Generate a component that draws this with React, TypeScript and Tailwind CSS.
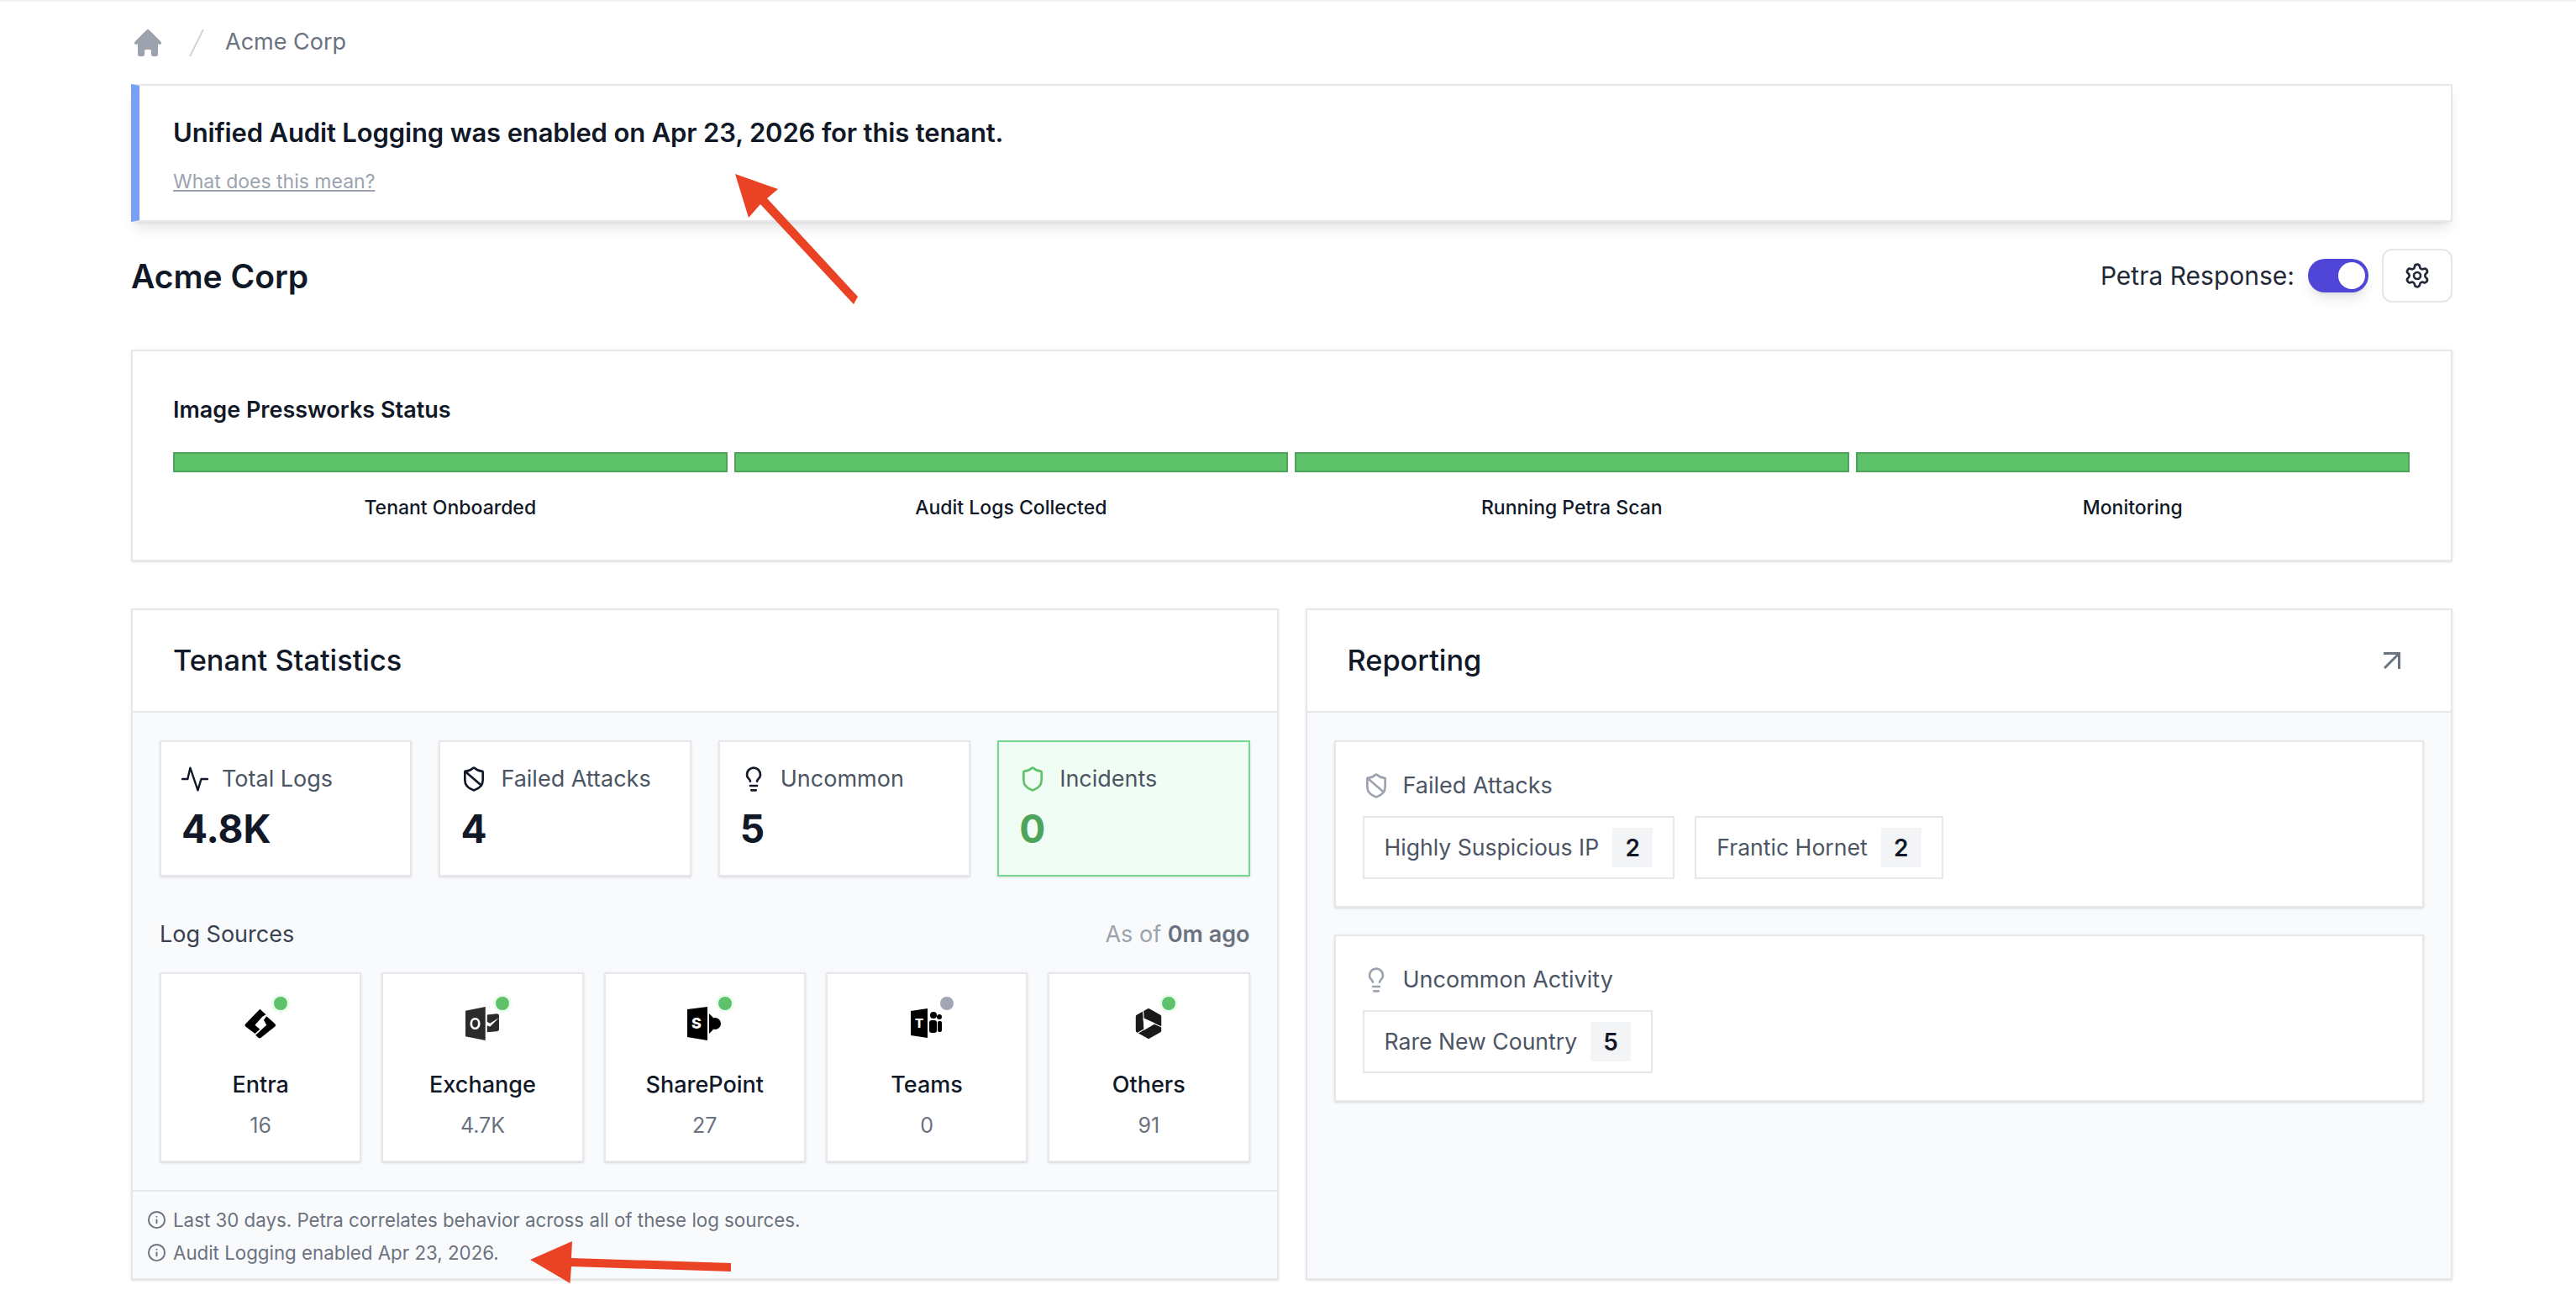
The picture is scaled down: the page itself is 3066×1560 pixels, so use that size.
import { Info, Lightbulb, Settings, Shield, ShieldBan } from "lucide-react";
import { ReactNode } from "react";

const steps = ["Tenant Onboarded", "Audit Logs Collected", "Running Petra Scan", "Monitoring"];

const EntraLogo = () => (
  <svg width="38" height="36" viewBox="33 64 114 110" fill="#000">
    <path d="M88 66 L110 86 L97 94 L70 124 L88 140 L70 156 L36 130 Q31 125 36 120 Z" />
    <path d="M112 92 L143 120 Q148 125 143 130 L92 170 Q87 174 82 170 L72 161 L112 124 L102 106 Z" />
  </svg>
);

const ExchangeLogo = () => (
  <svg width="40" height="40" viewBox="42 54 118 118">
    <path d="M42 68 L112 54 V172 L42 158 Z" fill="#2b2b2b" />
    <ellipse cx="76" cy="113" rx="14" ry="17" fill="none" stroke="#fff" strokeWidth="8" />
    <path d="M118 82 L152 78 Q160 78 160 86 V134 Q160 140 152 140 L118 143 V120 L128 124 L160 92 L128 112 L118 106 Z" fill="#2b2b2b" />
  </svg>
);

const SharePointLogo = () => (
  <svg width="42" height="40" viewBox="0 0 42 40">
    <path d="M0 3 L24 0 V40 L0 36 Z" fill="#000" />
    <text x="5" y="26" fontSize="18" fontWeight="800" fill="#fff" fontFamily="Inter, sans-serif">S</text>
    <circle cx="33" cy="20" r="7" fill="#000" />
    <path d="M26 8 L31 13 L26 20 L31 27 L26 32 Z" fill="#000" />
  </svg>
);

const TeamsLogo = () => (
  <svg width="38" height="36" viewBox="0 0 38 36">
    <path d="M0 3 L20 0 V35 L0 32 Z" fill="#000" />
    <text x="5" y="23" fontSize="15" fontWeight="800" fill="#fff" fontFamily="Inter, sans-serif">T</text>
    <circle cx="27" cy="8" r="4" fill="#000" />
    <circle cx="34" cy="10" r="3" fill="#000" />
    <rect x="22" y="14" width="9" height="15" rx="3" fill="#000" />
    <rect x="32" y="15" width="5" height="13" rx="2" fill="#000" />
  </svg>
);

const OthersLogo = () => (
  <svg width="38" height="40" viewBox="0 0 40 40">
    <path d="M20 3 L34 11 V29 L20 37 L6 29 V11 Z" fill="#1a1a1a" stroke="#1a1a1a" strokeWidth="4" strokeLinejoin="round" />
    <path d="M14 14 L27 20 L15 27 Z" fill="#fff" stroke="#fff" strokeWidth="1.5" strokeLinejoin="round" />
    <path d="M15 27 L13 2 M14 14 L38 25 M27 20 L6 32" stroke="#fff" strokeWidth="1.2" fill="none" />
  </svg>
);

const sources = [
  { name: "Entra", count: "16", logo: <EntraLogo />, active: true },
  { name: "Exchange", count: "4.7K", logo: <ExchangeLogo />, active: true },
  { name: "SharePoint", count: "27", logo: <SharePointLogo />, active: true },
  { name: "Teams", count: "0", logo: <TeamsLogo />, active: false },
  { name: "Others", count: "91", logo: <OthersLogo />, active: true },
];

const ActivityIcon = () => (
  <svg width="32" height="32" viewBox="0 0 24 24" fill="none" stroke="#111827" strokeWidth="1.8" strokeLinecap="round" strokeLinejoin="round">
    <path d="M0.8 12 H5.5 L7.8 2 L14.6 22 L17.6 12 H23.2" />
  </svg>
);

const StatCard = ({ icon, label, value, green }: { icon: ReactNode; label: string; value: string; green?: boolean }) => (
  <div className={green ? "h-[162px] border-2 border-[#74d68f] bg-[#f0fdf4] px-6 pt-7 shadow-sm" : "h-[162px] border-2 border-[#e5e7eb] bg-white px-6 pt-7 shadow-sm"}>
    <div className="flex h-8 items-center gap-4">
      {icon}
      <span className="text-[27px] text-[#4b5563]">{label}</span>
    </div>
    <div className={green ? "mt-5 text-[46px] leading-[46px] font-bold text-[#4ea45a]" : "mt-5 text-[46px] leading-[46px] font-bold text-[#111827]"}>
      {value}
    </div>
  </div>
);

const Chip = ({ label, count }: { label: string; count: number }) => (
  <div className="flex h-[75px] items-center gap-4 border-2 border-[#e5e7eb] bg-white pr-6 pl-6">
    <span className="text-[26.6px] text-[#4b5563]">{label}</span>
    <span className="flex h-[47px] w-12 items-center justify-center bg-[#f3f4f6] text-[28px] font-semibold text-[#111827]">{count}</span>
  </div>
);

export default function App() {
  return (
    <div className="relative h-[1560px] w-[3066px] overflow-hidden border-t-2 border-[#f3f4f6] bg-white pr-[147px] pl-[156px] font-['Inter',sans-serif] text-[#111827]">
      <nav className="flex h-[98px] items-center">
        <svg width="40" height="40" viewBox="0 0 20 20" fill="#9ca3af">
          <path d="M10.707 2.293a1 1 0 00-1.414 0l-7 7a1 1 0 001.414 1.414L4 10.414V17a1 1 0 001 1h2a1 1 0 001-1v-2a1 1 0 011-1h2a1 1 0 011 1v2a1 1 0 001 1h2a1 1 0 001-1v-6.586l.293.293a1 1 0 001.414-1.414l-7-7z" />
        </svg>
        <svg className="ml-[18px]" width="40" height="40" viewBox="0 0 20 20" fill="#d1d5db">
          <path d="M5.555 17.776l8-16 .894.448-8 16-.894-.448z" />
        </svg>
        <span className="mb-[2px] ml-[14px] text-[27px] text-[#6b7280]">Acme Corp</span>
      </nav>

      <div className="flex h-[164px] flex-col border-2 border-l-[10px] border-[#e5e7eb] border-l-[#78a1f5] bg-white pt-[37px] pl-[40px] shadow-lg">
        <p className="text-[31px] leading-[38px] font-semibold tracking-[-0.15px]">Unified Audit Logging was enabled on Apr 23, 2026 for this tenant.</p>
        <a className="mt-[23px] text-[23px] leading-[32px] text-[#9ca3af] underline">What does this mean?</a>
      </div>

      <div className="mt-[32px] flex h-[64px] items-center justify-between">
        <h1 className="pt-[2px] text-[39px] font-semibold">Acme Corp</h1>
        <div className="flex items-center gap-4">
          <span className="text-[30px] text-[#1f2937]">Petra Response:</span>
          <div className="flex h-10 w-[72px] justify-end rounded-full bg-[#4f46d8] p-1 shadow-lg">
            <span className="size-8 rounded-full bg-white" />
          </div>
          <button className="flex h-[64px] w-[84px] items-center justify-center rounded-xl border-2 border-[#e5e7eb] bg-white">
            <Settings size={32} color="#1f2937" strokeWidth={2} />
          </button>
        </div>
      </div>

      <section className="mt-[56px] h-[252px] border-2 border-[#e5e7eb] bg-white pt-[52px] pr-[49px] pl-12 shadow-sm">
        <h2 className="text-[27px] leading-9 font-semibold">Image Pressworks Status</h2>
        <div className="mt-[32px] grid grid-cols-4 gap-2">
          {steps.map((step) => (
            <div key={step}>
              <div className="h-6 border-2 border-[#4ea45a] bg-[#5ec26a]" />
              <div className="mt-[26px] text-center text-[23px] leading-8 font-medium">{step}</div>
            </div>
          ))}
        </div>
      </section>

      <div className="mt-[56px] grid grid-cols-2 gap-8">
        <section className="flex flex-col border-2 border-[#e5e7eb] bg-[#f9fafb] shadow-sm">
          <header className="flex h-[122px] items-center border-b-2 border-[#e5e7eb] bg-white px-12">
            <h2 className="text-[34.3px] font-medium">Tenant Statistics</h2>
          </header>
          <div className="p-8 pt-[33px] pb-[33px]">
            <div className="grid grid-cols-4 gap-8">
              <StatCard icon={<ActivityIcon />} label="Total Logs" value="4.8K" />
              <StatCard icon={<ShieldBan size={32} color="#111827" strokeWidth={2} />} label="Failed Attacks" value="4" />
              <StatCard icon={<Lightbulb size={32} color="#111827" strokeWidth={2} />} label="Uncommon" value="5" />
              <StatCard icon={<Shield size={32} color="#5ec26a" strokeWidth={2} />} label="Incidents" value="0" green />
            </div>
            <div className="mt-[52px] flex h-[34px] items-center justify-between">
              <span className="text-[27px] text-[#374151]">Log Sources</span>
              <span className="text-[27px] text-[#9ca3af]">
                As of <span className="font-semibold text-[#6b7280]">0m ago</span>
              </span>
            </div>
            <div className="mt-[28px] grid grid-cols-5 gap-6">
              {sources.map((s) => (
                <div key={s.name} className="flex h-[226px] flex-col items-center border-2 border-[#e5e7eb] bg-white pt-[35px] shadow-sm">
                  <div className="relative flex size-12 items-center justify-center">
                    {s.logo}
                    <span className={s.active ? "absolute -top-2 -right-2 size-4 rounded-full bg-[#5ec26a] ring-[3px] ring-[#ecfdf0]" : "absolute -top-2 -right-2 size-4 rounded-full bg-[#a1a5b4]"} />
                  </div>
                  <div className="mt-[31px] text-[27px] leading-9 font-medium">{s.name}</div>
                  <div className="mt-[14px] text-[25px] leading-8 text-[#6b7280]">{s.count}</div>
                </div>
              ))}
            </div>
          </div>
          <footer className="border-t-2 border-[#e5e7eb] px-[17px] pt-[14px] pb-[11px] text-[22.3px] leading-[39px] text-[#6b7280]">
            <div className="flex items-center gap-2">
              <Info size={23} strokeWidth={2} />
              Last 30 days. Petra correlates behavior across all of these log sources.
            </div>
            <div className="flex items-center gap-2">
              <Info size={23} strokeWidth={2} />
              Audit Logging enabled Apr 23, 2026.
            </div>
          </footer>
        </section>

        <section className="flex flex-col border-2 border-[#e5e7eb] bg-[#f9fafb] shadow-sm">
          <header className="flex h-[122px] items-center justify-between border-b-2 border-[#e5e7eb] bg-white pr-[60px] pl-12">
            <h2 className="text-[34.3px] font-medium">Reporting</h2>
            <svg width="20" height="20" viewBox="0 0 20 20" fill="none" stroke="#6b7280" strokeWidth="3">
              <path d="M0 1.5 H18.5 V20 M18.5 1.5 L1 19" />
            </svg>
          </header>
          <div className="flex flex-col gap-8 p-8 pt-[33px]">
            <div className="h-[199px] border-2 border-[#e5e7eb] bg-white px-8 pt-9 shadow-sm">
              <div className="flex h-8 items-center gap-4">
                <ShieldBan size={32} color="#9ca3af" strokeWidth={2} />
                <span className="text-[27px] text-[#4b5563]">Failed Attacks</span>
              </div>
              <div className="mt-5 flex gap-6">
                <Chip label="Highly Suspicious IP" count={2} />
                <Chip label="Frantic Hornet" count={2} />
              </div>
            </div>
            <div className="h-[199px] border-2 border-[#e5e7eb] bg-white px-8 pt-9 shadow-sm">
              <div className="flex h-8 items-center gap-4">
                <Lightbulb size={32} color="#9ca3af" strokeWidth={2} />
                <span className="text-[27px] text-[#4b5563]">Uncommon Activity</span>
              </div>
              <div className="mt-5 flex gap-6">
                <Chip label="Rare New Country" count={5} />
              </div>
            </div>
          </div>
        </section>
      </div>

      {/* red annotation arrows drawn on top of the screenshot */}
      <svg className="absolute top-[203px] left-[870px]" width="155" height="162" viewBox="870 205 155 162" fill="#ea4224">
        <path d="M875 207 L926 225 L913 236 L1021 353 L1016 362 L905 243 L891 259 Z" />
      </svg>
      <svg className="absolute top-[1473px] left-[628px]" width="244" height="56" viewBox="628 1475 244 56" fill="#ea4224">
        <path d="M631 1499 L681 1477 L680 1497 L870 1503 V1513 L680 1507 L678.5 1527 Z" />
      </svg>
    </div>
  );
}
